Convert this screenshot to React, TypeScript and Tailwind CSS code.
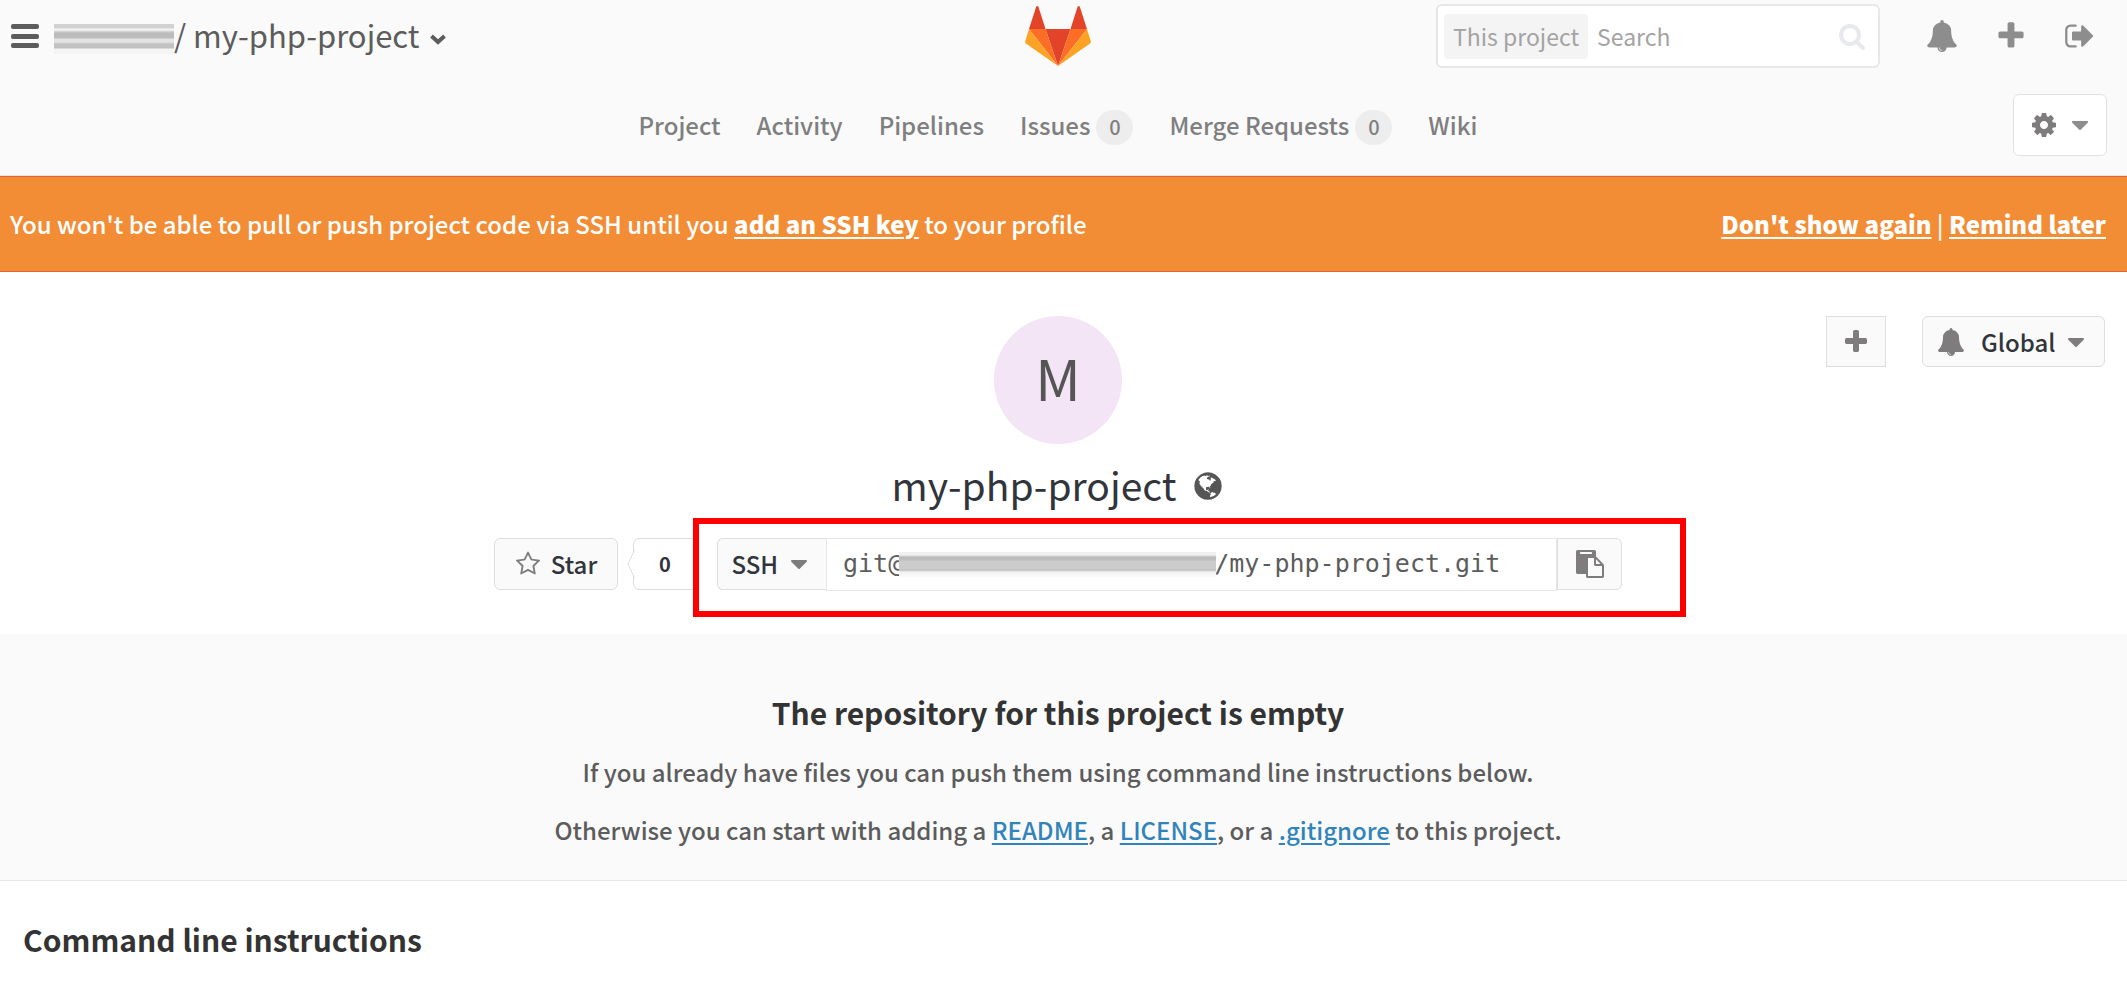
import React from "react";

const paths = {
  bell: "M912 1696q0-16-16-16-59 0-101.5-42.5t-42.5-101.5q0-16-16-16t-16 16q0 73 51.5 124.5t124.5 51.5q16 0 16-16zm816-288q0 52-38 90t-90 38h-448q0 106-75 181t-181 75-181-75-75-181h-448q-52 0-90-38t-38-90q50-42 91-88t85-119.5 74.5-158.5 50-206 19.5-260q0-152 117-282.5t307-158.5q-8-19-8-39 0-40 28-68t68-28 68 28 28 68q0 20-8 39 190 28 307 158.5t117 282.5q0 139 19.5 260t50 206 74.5 158.5 85 119.5 91 88z",
  plus: "M1600 736v192q0 40-28 68t-68 28h-416v416q0 40-28 68t-68 28h-192q-40 0-68-28t-28-68v-416h-416q-40 0-68-28t-28-68v-192q0-40 28-68t68-28h416v-416q0-40 28-68t68-28h192q40 0 68 28t28 68v416h416q40 0 68 28t28 68z",
  signOut: "M704 1440q0 4 1 20t.5 26.5-3 23.5-10 19.5-20.5 6.5h-320q-119 0-203.5-84.5t-84.5-203.5v-704q0-119 84.5-203.5t203.5-84.5h320q13 0 22.5 9.5t9.5 22.5q0 4 1 20t.5 26.5-3 23.5-10 19.5-20.5 6.5h-320q-66 0-113 47t-47 113v704q0 66 47 113t113 47h312l11.5 1 11.5 3 8 5.5 7 9 2 13.5zm928-544q0 26-19 45l-544 544q-19 19-45 19t-45-19-19-45v-288h-448q-26 0-45-19t-19-45v-384q0-26 19-45t45-19h448v-288q0-26 19-45t45-19 45 19l544 544q19 19 19 45z",
  search: "M1216 832q0-185-131.5-316.5t-316.5-131.5-316.5 131.5-131.5 316.5 131.5 316.5 316.5 131.5 316.5-131.5 131.5-316.5zm512 832q0 52-38 90t-90 38q-54 0-90-38l-343-342q-179 124-399 124-143 0-273.5-55.5t-225-150-150-225-55.5-273.5 55.5-273.5 150-225 225-150 273.5-55.5 273.5 55.5 225 150 150 225 55.5 273.5q0 220-124 399l343 343q37 37 37 90z",
  cog: "M1152 896q0-106-75-181t-181-75-181 75-75 181 75 181 181 75 181-75 75-181zm512-109v222q0 12-8 23t-20 13l-185 28q-19 54-39 91 35 50 107 138 10 12 10 25t-9 23q-27 37-99 108t-94 71q-12 0-26-9l-138-108q-44 23-91 38-16 136-29 186-7 28-36 28h-222q-14 0-24.5-8.5t-11.5-21.5l-28-184q-49-16-90-37l-141 107q-10 9-25 9-14 0-25-11-126-114-165-168-7-10-7-23 0-12 8-23 15-21 51-66.5t54-70.5q-27-50-41-99l-183-27q-13-2-21-12.5t-8-23.5v-222q0-12 8-23t19-13l186-28q14-46 39-92-40-57-107-138-10-12-10-24 0-10 9-23 26-36 98.5-107.5t94.5-71.5q13 0 26 10l138 107q44-23 91-38 16-136 29-186 7-28 36-28h222q14 0 24.5 8.5t11.5 21.5l28 184q49 16 90 37l142-107q9-9 24-9 13 0 25 10 129 119 165 170 7 8 7 22 0 12-8 23-15 21-51 66.5t-54 70.5q26 50 41 98l183 28q13 2 21 12.5t8 23.5z",
  caret: "M1408 704q0 26-19 45l-448 448q-19 19-45 19t-45-19l-448-448q-19-19-19-45t19-45 45-19h896q26 0 45 19t19 45z",
  star: "M1201 1004l306-297-422-62-189-382-189 382-422 62 306 297-73 421 378-199 377 199zm527-357q0 22-26 48l-363 354 86 500q1 7 1 20 0 50-41 50-19 0-40-12l-449-236-449 236q-22 12-40 12-21 0-31.5-14.5t-10.5-35.5q0-6 2-20l86-500-364-354q-25-27-25-48 0-37 56-46l502-73 225-455q19-41 49-41t49 41l225 455 502 73q56 9 56 46z",
  clipboard: "M768 1664h896v-640h-416q-40 0-68-28t-28-68v-416h-384v1152zm256-1440v-64q0-13-9.5-22.5t-22.5-9.5h-704q-13 0-22.5 9.5t-9.5 22.5v64q0 13 9.5 22.5t22.5 9.5h704q13 0 22.5-9.5t9.5-22.5zm256 672h299l-299-299v299zm512 128v672q0 40-28 68t-68 28h-960q-40 0-68-28t-28-68v-160h-544q-40 0-68-28t-28-68v-1344q0-40 28-68t68-28h1088q40 0 68 28t28 68v328q21 13 36 28l408 408q28 28 48 76t20 88z",
  globe: "M896 128q209 0 385.5 103t279.5 279.5 103 385.5-103 385.5-279.5 279.5-385.5 103-385.5-103-279.5-279.5-103-385.5 103-385.5 279.5-279.5 385.5-103zm274 521q-2 1-9.5 9.5t-13.5 9.5q2 0 4.5-5t5-11 3.5-7q6-7 22-15 14-6 52-12 34-8 51 11-2-2 9.5-13t14.5-12q3-2 15-4.5t15-7.5l2-22q-12 1-17.5-7t-6.5-21q0 2-6 8 0-7-4.5-8t-11.5 1-9 1q-10-3-15-7.5t-8-16.5-4-15q-2-5-9.5-11t-9.5-10q-1-2-2.5-5.5t-3-6.5-4-5.5-5.5-2.5-7 5-7.5 10-4.5 5q-3-2-6-1.5t-4.5 1-4.5 3-5 3.5q-3 2-8.5 3t-8.5 2q15-5-1-11-10-4-16-3 9-4 7.5-12t-8.5-14h5q-1-4-8.5-8.5t-17.5-8.5-13-6q-8-5-34-9.5t-33-.5q-5 6-4.5 10.5t4 14 3.5 12.5q1 6-5.5 13t-6.5 12q0 7 14 15.5t10 21.5q-3 8-16 16t-16 12q-5 8-1.5 18.5t10.5 16.5q2 2 1.5 4t-3.5 4.5-5.5 4-6.500 3.500l-3 2q-11 5-20.5-6t-13.5-26q-7-25-16-30-23-8-29 1-5-13-41-26-25-9-58-4 6-1 0-15-7-15-19-12 3-6 4-17.500t1-13.500q3-13 12-23 1-1 7-8.500t9.500-13.500.5-6q35 4 50-11 5-5 11.500-17t10.500-17q9-6 14-5.500t14.500 5.500 14.500 5q14 1 15.500-11t-7.500-20q12 1 3-17-4-7-8-9-12-4-27 5-8 4 2 8-1-1-9.500 10.500t-16.500 17.500-16-5q-1-1-5.500-13.500t-9.500-13.500q-8 0-16 15 3-8-11-15t-24-8q19-12-8-27-7-4-20.500-5t-19.500 4q-5 7-5.500 11.500t5 8 10.500 5.500 11.500 4 8.500 3q14 10 8 14-2 1-8.500 3.500t-11.500 4.500-6 4q-3 4 0 14t-2 14q-5-5-9-17.500t-7-16.500q7 9-25 6l-10-1q-4 0-16 2t-20.500 1-13.500-8q-4-8 0-20 1-4 4-2-4-3-11-9.500t-10-8.500q-46 15-94 41 6 1 12-1 5-2 13-6.500t10-5.500q34-14 42-7l5-5q14 16 20 25-7-4-30-1-20 6-22 12 7 12 5 18-4-3-11.500-10t-14.500-11-15-5q-16 0-22 1-146 80-235 222 7 7 12 8 4 1 5 9t2.500 11 11.500-3q9 8 3 19 1-1 44 27 19 17 21 21 3 11-10 18-1-2-9-9t-9-4q-3 5 .5 18.500t10.500 12.500q-7 0-9.500 16t-2.500 35.500-1 23.500l2 1q-3 12 5.500 34.500t21.500 19.500q-13 3 20 43 6 8 8 9 3 2 12 7.500t15 10 10 10.500q4 5 10 22.500t14 23.500q-2 6 9.500 20t10.500 23q-1 0-2.500 1t-2.500 1q3 7 15.500 14t15.500 13q1 3 2 10t3 11 8 2q2-20-24-62-15-25-17-29-3-5-5.500-15.500t-4.500-14.500q2 0 6 1.500t8.500 3.500 7.500 4 2 3q-3 7 2 17.500t12 18.500 17 19 12 13q6 6 14 19.500t0 13.500q9 0 20 10.500t17 19.500q5 8 8 26t5 24q2 7 8.500 13.500t12.500 9.500l16 8 13 7q5 2 18.500 10.500t21.500 11.500q10 4 16 4t14.500-2.500 13.500-3.500q15-2 29 15t21 21q36 19 55 11-2 1 .5 7.500t8 15.500 9 14.500 5.500 8.500q5 6 18 15t18 15q6-4 7-9-3 8 7 20t18 10q14-3 14-32-31 15-49-18 0-1-2.500-5.500t-4-8.500-2.500-8.500 0-7.500 5-3q9 0 10-3.500t-2-12.500-4-13q-1-8-11-20t-12-15q-5 9-16 8t-16-9q0 1-1.500 5.500t-1.500 6.500q-13 0-15-1 1-3 2.500-17.500t3.500-22.500q1-4 5.500-12t7.500-14.500 4-12.500-4.500-9.500-17.500-2.500q-19 1-26 20-1 3-3 10.500t-5 11.500-9 7q-7 3-24 2t-24-5q-13-8-22.500-29t-9.500-37q0-10 2.500-26.500t3-25-5.500-24.500q3-2 9-9.500t10-10.500q2-1 4.500-1.500t4.500 0 4-1.500 3-6q-1-1-4-3-3-3-4-3 7 3 28.500-1.500t27.500 1.500q15 11 22-2 0-1-2.500-9.500t-.5-13.500q5 27 29 9 3 3 15.500 5t17.500 5q3 2 7 5.500t5.500 4.500 5-.5 8.500-6.500q10 14 12 24 11 40 19 44 7 3 11 2t4.500-9.500 0-14-1.500-12.500l-1-8v-18l-1-8q-15-3-18.500-12t1.500-18.500 15-18.500q1-1 8-3.500t15.500-6.500 12.500-8q21-19 15-35 7 0 11-9-1 0-5-3t-7.500-5-4.500-2q9-5 2-16 5-3 7.500-11t7.500-10q9 12 21 2 8-8 1-16 5-7 20.500-10.500t18.500-9.500q7 2 8-2t1-12 3-12q4-5 15-9t13-5l17-11q3-4 0-4 18 2 31-11 10-11-6-20 3-6-3-9.500t-15-5.500q3-1 11.500-.5t10.500-1.500q15-10-7-16-17-5-43 12zm-163 877q206-36 351-189-3-3-12.500-4.500t-12.500-3.500q-18-7-24-8 1-7-2.500-13t-8-9-12.500-8-11-7q-2-2-7-6t-7-5.500-7.500-4.500-8.500-2-10 1l-3 1q-3 1-5.500 2.500t-5.500 3-4 3 0 2.500q-21-17-36-22-5-1-11-5.500t-10.500-7-10-1.500-11.500 7q-5 5-6 15t-2 13q-7-5 0-17.500t2-18.500q-3-6-10.500-4.500t-12 4.500-11.500 8.500-9 6.500-8.500 5.500-8.500 7.500q-3 4-6 12t-5 11q-2-4-11.500-6.500t-9.500-5.500q2 10 4 35t5 38q7 31-12 48-27 25-29 40-4 22 12 26 0 7-8 20.500t-7 21.500q0 6 2 16z",
};

function Icon({ name, className }: { name: keyof typeof paths; className: string }) {
  return (
    <svg viewBox="0 0 1792 1792" fill="currentColor" aria-hidden="true" className={className}>
      <path d={paths[name]} />
    </svg>
  );
}

function Logo() {
  return (
    <svg viewBox="0 0 66 60" className="h-[60px] w-[66px]" aria-hidden="true">
      <path fill="#e24329" d="M33 60 20.500 23h25z" />
      <path fill="#fc6d26" d="M33 60 20.500 23H4z" />
      <path fill="#fca326" d="M4 23 .2 35.200a2 2 0 0 0 .7 2.200L33 60z" />
      <path fill="#e24329" d="M4 23h16.500L13.500.9c-.4-1.100-2-1.100-2.400 0z" />
      <path fill="#fc6d26" d="M33 60 45.500 23H62z" />
      <path fill="#fca326" d="m62 23 3.800 12.200a2 2 0 0 1-.7 2.200L33 60z" />
      <path fill="#e24329" d="M62 23H45.500L52.500.9c.4-1.100 2-1.100 2.400 0z" />
    </svg>
  );
}

const tabs: { label: string; count?: number }[] = [
  { label: "Project" },
  { label: "Activity" },
  { label: "Pipelines" },
  { label: "Issues", count: 0 },
  { label: "Merge Requests", count: 0 },
  { label: "Wiki" },
];

function Header() {
  return (
    <header className="border-b border-[#e5e5e5] bg-[#fafafa]">
      <div className="grid h-[72px] grid-cols-[1fr_auto_1fr] items-center pr-[11px]">
        <div className="flex items-center pl-[11px] text-[#5c5c5c]">
          <button aria-label="Toggle navigation" className="mr-[15px] flex h-7 flex-col justify-between py-[2px]">
            <span className="h-[5px] w-7 rounded-[2px] bg-current" />
            <span className="h-[5px] w-7 rounded-[2px] bg-current" />
            <span className="h-[5px] w-7 rounded-[2px] bg-current" />
          </button>
          <h1 className="flex items-end text-[31px] leading-10">
            <span className="mb-[3px] h-[30px] w-[120px] bg-[linear-gradient(to_bottom,#d2d2d2_0_4px,#f4f4f4_5px_6px,#dcdcdc_7px,#bcbcbc_9px_14px,#e4e4e4_15px_18px,#c2c2c2_20px_24px,#f4f4f4_25px_30px)]" />
            <a href="#project" className="whitespace-nowrap pb-[2px]">/ my-php-project</a>
          </h1>
          <button aria-label="Switch project" className="ml-[10px] pt-[6px]">
            <svg viewBox="0 0 16 11" className="h-[11px] w-4" fill="none" stroke="currentColor" strokeWidth="4" aria-hidden="true">
              <path d="m1.500 2 6.500 6 6.500-6" />
            </svg>
          </button>
        </div>
        <a href="#home" aria-label="Dashboard">
          <Logo />
        </a>
        <div className="flex items-center justify-end pr-5 text-[#8d8d8d]">
          <form className="mr-[46px] flex h-16 w-[444px] items-center rounded-md border-2 border-[#e7e7e7] bg-white pl-[6px] pr-3 text-[23px] text-[#a3a3a3]">
            <span className="flex h-[45px] shrink-0 items-center rounded-sm bg-[#f4f4f4] px-[9px]">This project</span>
            <input aria-label="Search" placeholder="Search" className="ml-[9px] min-w-0 flex-1 outline-none placeholder:text-[#a3a3a3]" />
            <Icon name="search" className="size-7 text-[#e7e9ed]" />
          </form>
          <button aria-label="Notifications" className="mr-[37px]"><Icon name="bell" className="size-8" /></button>
          <button aria-label="New" className="mr-[37px]"><Icon name="plus" className="size-8" /></button>
          <button aria-label="Sign out"><Icon name="signOut" className="size-8" /></button>
        </div>
      </div>
      <div className="grid h-[103px] grid-cols-[1fr_auto_1fr] items-center pr-[11px] pt-[3px]">
        <nav className="col-start-2 flex items-center gap-9 text-[24px] font-medium leading-9 text-[#7f7f7f]">
          {tabs.map((tab) => (
            <a key={tab.label} href="#tab" className="flex items-center gap-[6px] whitespace-nowrap">
              {tab.label}
              {tab.count !== undefined && (
                <span className="mt-1 flex h-[35px] w-[37px] items-center justify-center rounded-full bg-[#ededed] text-[20px]">
                  {tab.count}
                </span>
              )}
            </a>
          ))}
        </nav>
        <div className="flex justify-end pr-[9px]">
          <button aria-label="Project settings" className="flex h-[62px] w-[94px] items-center justify-center gap-2 rounded-md border border-[#e1e1e1] bg-white pl-1 text-[#7f7c7e]">
            <Icon name="cog" className="size-7" />
            <Icon name="caret" className="size-7 text-[#8d8d8d]" />
          </button>
        </div>
      </div>
    </header>
  );
}

export default function App() {
  return (
    <div className="min-h-screen bg-white font-['Noto_Sans_CJK_SC','Noto_Sans',sans-serif] text-[24px] leading-9 text-[#5c5c5c]">
      <Header />
      <div className="flex h-24 items-center justify-between border-y border-[#e8613c] bg-[#f28d35] pl-[10px] pr-[21px] font-medium text-white">
        <p>
          You won't be able to pull or push project code via SSH until you{" "}
          <a href="#ssh" className="font-black underline decoration-2 underline-offset-3">add an SSH key</a> to your profile
        </p>
        <p>
          <a href="#hide" className="font-black underline decoration-2 underline-offset-3">Don't show again</a>
          {" | "}
          <a href="#later" className="font-black underline decoration-2 underline-offset-3">Remind later</a>
        </p>
      </div>

      <section className="grid grid-cols-[1fr_auto_1fr] pb-11 pr-[11px] pt-11">
        <div className="col-start-2 flex flex-col items-center">
          <div className="flex size-32 items-center justify-center rounded-full bg-[#f3e5f5] pb-[6px] text-[56px] leading-none text-[#555]">M</div>
          <h2 className="mt-[14px] flex items-center gap-4 text-[39px] leading-[52px] text-[#31353b]">
            my-php-project
            <Icon name="globe" className="mt-1 size-8 text-[#555]" />
          </h2>
          <div className="mt-7 flex h-[52px] items-center text-[#31353b]">
            <button className="flex h-[52px] w-[124px] items-center justify-center gap-[10px] rounded-md border border-[#dedede] bg-[#fafafa] font-medium">
              <Icon name="star" className="size-[26px] text-[#7f7c7e]" />
              Star
            </button>
            <span className="relative ml-[15px] flex h-[52px] w-16 items-center justify-center rounded-md border border-[#dedede] bg-white text-[20px] font-bold">
              <svg viewBox="0 0 8 30" className="absolute -left-[7px] top-[10px] h-[30px] w-2" aria-hidden="true">
                <path d="M8 1 1 15l7 14z" fill="#fff" />
                <path d="M7.500 1 1 15l6.500 14" fill="none" stroke="#dedede" />
              </svg>
              0
            </span>
            <div className="relative ml-5 flex h-[52px] items-center">
              <label className="flex h-[52px] w-[109px] items-center justify-center rounded-l-md border border-r-0 border-[#dedede] bg-[#fafafa]">
                <select aria-label="Clone protocol" className="appearance-none bg-transparent font-medium outline-none">
                  <option>SSH</option>
                </select>
                <Icon name="caret" className="ml-[6px] size-7 text-[#7f7c7e]" />
              </label>
              <div className="flex h-[53px] w-[731px] items-center border border-[#e7e7e7] bg-white pl-4 font-['DejaVu_Sans_Mono',monospace] text-[25px] text-[#5c5c5c]">
                <span>git@</span>
                <span className="relative -ml-1 h-[25px] w-[317px] bg-[linear-gradient(to_bottom,#f0f0f0_0_3px,#bcbcbc_5px_8px,#cccccc_9px_17px,#bdbdbd_18px,#f3f3f3_20px,#fafafa_25px)]" />
                <input
                  aria-label="Clone URL"
                  readOnly
                  value="/my-php-project.git"
                  className="-ml-[2px] min-w-0 flex-1 bg-transparent outline-none"
                />
              </div>
              <button aria-label="Copy URL" className="flex h-[52px] w-[65px] items-center justify-center rounded-r-md border border-[#dedede] bg-[#fafafa] text-[#7f7c7e]">
                <Icon name="clipboard" className="size-7" />
              </button>
              <span className="pointer-events-none absolute -left-6 -right-16 -top-5 h-[99px] border-6 border-[#ff0000]" />
            </div>
          </div>
        </div>
        <div className="flex items-start justify-end gap-9 pr-[11px] text-[#7f7c7e]">
          <button aria-label="Add to project" className="flex h-[51px] w-[60px] items-center justify-center border border-[#dedede] bg-[#fafafa]">
            <Icon name="plus" className="size-7" />
          </button>
          <label className="flex h-[51px] w-[183px] items-center justify-center rounded-md border border-[#dedede] bg-[#fafafa]">
            <Icon name="bell" className="mr-4 size-7" />
            <select aria-label="Notification level" className="appearance-none bg-transparent font-medium text-[#31353b] outline-none">
              <option>Global</option>
            </select>
            <Icon name="caret" className="ml-[6px] size-7" />
          </label>
        </div>
      </section>

      <section className="flex flex-col items-center border-b border-[#e7e7e7] bg-[#fafafa] pb-8 pr-[11px] pt-14 font-medium">
        <h3 className="text-[30px] font-bold leading-[44px] text-[#333]">The repository for this project is empty</h3>
        <p className="mt-5">If you already have files you can push them using command line instructions below.</p>
        <p className="mt-[22px]">
          Otherwise you can start with adding a <a href="#readme" className="text-[#3084bb] underline decoration-2 underline-offset-3">README</a>, a{" "}
          <a href="#license" className="text-[#3084bb] underline decoration-2 underline-offset-3">LICENSE</a>, or a{" "}
          <a href="#gitignore" className="text-[#3084bb] underline decoration-2 underline-offset-3">.gitignore</a> to this project.
        </p>
      </section>

      <h3 className="pl-[23px] pt-9 text-[30px] font-bold leading-[44px] text-[#333]">Command line instructions</h3>
    </div>
  );
}
